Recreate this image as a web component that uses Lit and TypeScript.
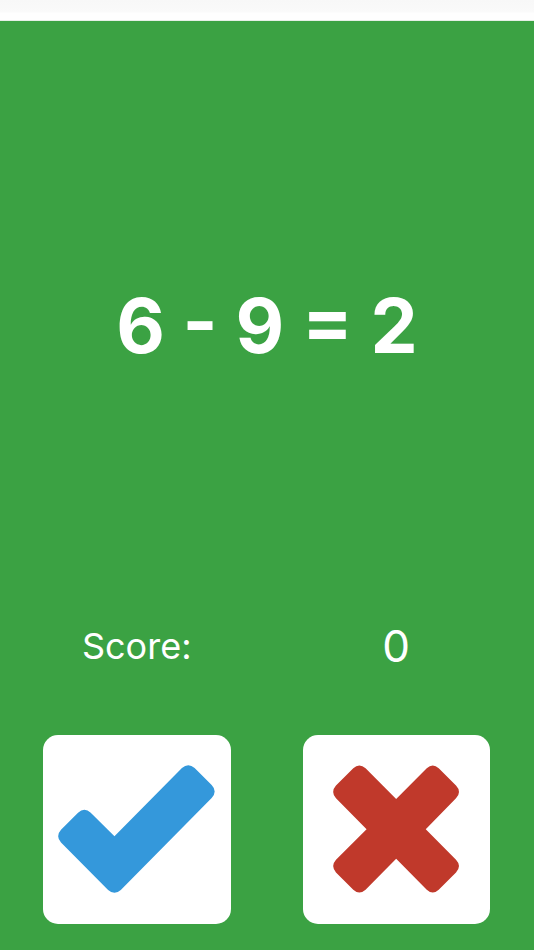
import { LitElement, html, css } from "lit";
import { customElement, state } from "lit/decorators.js";

interface Question {
  left: number;
  right: number;
  shown: number;
}

@customElement("app-root")
export class AppRoot extends LitElement {
  static styles = css`
    :host {
      display: block;
      font-family: Inter, "Liberation Sans", sans-serif;
    }
    .page {
      display: flex;
      flex-direction: column;
      min-height: 100vh;
      box-sizing: border-box;
      background: #3ba243;
      color: #fff;
    }
    .status {
      height: 20px;
      background: linear-gradient(#f8f8f8 0, #fafafa 12px, #fefefe 13px);
      border-bottom: 1px solid #e6efe6;
    }
    .question {
      flex: 1;
      display: flex;
      align-items: center;
      justify-content: center;
      margin: 0;
      font-size: 75px;
      font-weight: 700;
      line-height: 96px;
      white-space: nowrap;
    }
    .row {
      display: grid;
      grid-template-columns: 1fr 1fr;
      column-gap: 72px;
      padding: 0 44px 0 43px;
    }
    .score {
      align-items: center;
      justify-items: center;
      height: 30px;
      margin-bottom: 74px;
      font-size: 36px;
      line-height: 30px;
    }
    .value {
      font-size: 44px;
    }
    .answers {
      padding-bottom: 26px;
    }
    .answer {
      display: flex;
      align-items: center;
      justify-content: center;
      aspect-ratio: 188 / 190;
      padding: 0;
      border: 0;
      border-radius: 15px;
      background: #fff;
      cursor: pointer;
    }
    .icon {
      display: block;
      height: 128px;
    }
    .yes {
      width: 157px;
      fill: #3498db;
    }
    .no {
      width: 126px;
      fill: #c0392b;
    }
  `;

  @state() private score = 0;
  @state() private question: Question = { left: 6, right: 9, shown: 2 };

  private answer(saysTrue: boolean) {
    const { left, right, shown } = this.question;
    if ((left - right === shown) === saysTrue) this.score += 1;
    const digit = () => Math.floor(Math.random() * 10);
    const a = digit();
    const b = digit();
    this.question = {
      left: a,
      right: b,
      shown: Math.random() < 0.5 ? a - b : digit(),
    };
  }

  render() {
    const { left, right, shown } = this.question;
    return html`
      <div class="page">
        <div class="status"></div>
        <h1 class="question">${left} - ${right} = ${shown}</h1>
        <div class="row score">
          <span id="score-label">Score:</span>
          <output class="value" aria-labelledby="score-label">${this.score}</output>
        </div>
        <div class="row answers">
          <button class="answer" type="button" aria-label="Correct" @click=${() => this.answer(true)}>
            <svg class="icon yes" viewBox="85 121 470 383" aria-hidden="true">
              <path
                d="M254 334L456 130Q475 113 494 130L545 181Q563 200 545 220L273 495Q254 512 235 495L94 353Q77 334 94 315L145 264Q164 246 183 264Z"
              />
            </svg>
          </button>
          <button class="answer" type="button" aria-label="Wrong" @click=${() => this.answer(false)}>
            <svg class="icon no" viewBox="129 121 379 383" aria-hidden="true">
              <path
                d="M319 222L411 130Q429 113 447 130L499 182Q517 201 499 220L408 313L499 405Q517 424 499 443L447 495Q429 512 411 495L319 402L227 495Q208 512 190 495L138 443Q121 424 138 405L230 313L138 220Q121 201 138 182L190 130Q208 113 227 130Z"
              />
            </svg>
          </button>
        </div>
      </div>
    `;
  }
}
